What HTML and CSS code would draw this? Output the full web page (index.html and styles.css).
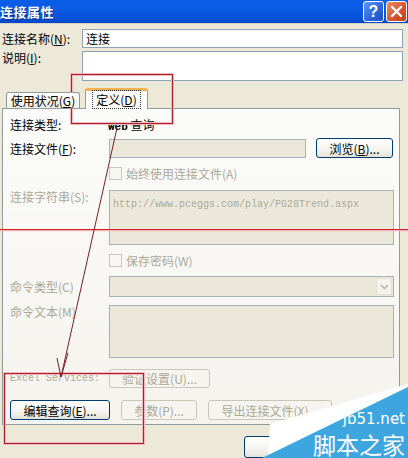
FILE: index.html
```html
<!DOCTYPE html>
<html>
<head>
<meta charset="utf-8">
<link rel="stylesheet" href="styles.css">
</head>
<body>
<div class="win">
  <div class="titlebar">
    <span class="title">连接属性</span>
    <div class="tbtns">
      <span class="tb help">?</span>
      <span class="tb close"><svg width="13" height="13" viewBox="0 0 13 13"><path d="M2 2L11 11M11 2L2 11" stroke="#fff" stroke-width="2.4" stroke-linecap="round"/></svg></span>
    </div>
  </div>
  <div class="content">
    <div class="frow r-name"><span class="flabel">连接名称(<u>N</u>):</span><div class="field name">连接</div></div>
    <div class="frow r-desc"><span class="flabel">说明(<u>I</u>):</span><div class="field desc"></div></div>
    <div class="tabs">
      <div class="tab">使用状况(<u>G</u>)</div>
      <div class="tab active"><span class="focus">定义(<u>D</u>)</span></div>
    </div>
    <div class="panel">
      <div class="prow r1"><span class="plabel">连接类型:</span><span class="val"><span class="mono">Web</span> 查询</span></div>
      <div class="prow r2"><span class="plabel">连接文件(<u>F</u>):</span><div class="field dis file"></div><div class="btn browse">浏览(<u>B</u>)...</div></div>
      <div class="prow r3"><span class="plabel"></span><span class="cb"></span><span class="cbl dim">始终使用连接文件(A)</span></div>
      <div class="prow r4"><span class="plabel dim top">连接字符串(S):</span><div class="field dis area cs"><span class="mono url">http://www.pceggs.com/play/PG28Trend.aspx</span></div></div>
      <div class="prow r5"><span class="plabel"></span><span class="cb"></span><span class="cbl dim">保存密码(W)</span></div>
      <div class="prow r6"><span class="plabel dim">命令类型(C)</span><div class="field dis sel"><span class="dd"><svg width="9" height="6" viewBox="0 0 9 6"><path d="M1 1L4.5 4.5L8 1" fill="none" stroke="#B9B6A8" stroke-width="1.6"/></svg></span></div></div>
      <div class="prow r7"><span class="plabel dim top">命令文本(M)</span><div class="field dis area ct"></div></div>
      <div class="prow r8"><span class="plabel dim mono xs">Excel Services:</span><div class="btn disb verify">验证设置(U)...</div></div>
      <div class="prow r9"><div class="btn edit">编辑查询(<u>E</u>)...</div><div class="btn disb params">参数(P)...</div><div class="btn disb export">导出连接文件(X)...</div></div>
    </div>
    <div class="footer"><div class="btn ok">确定</div></div>
  </div>
</div>
<svg class="overlay" width="408" height="458" viewBox="0 0 408 458">
  <g fill="none">
    <rect x="71.5" y="74.5" width="101" height="49" stroke="#f4b8bc" stroke-width="3"/>
    <rect x="71.5" y="74.5" width="101" height="49" stroke="#a8232f" stroke-width="1"/>
    <rect x="4.5" y="373.5" width="139" height="70" stroke="#f4b8bc" stroke-width="3"/>
    <rect x="4.5" y="373.5" width="139" height="70" stroke="#a8232f" stroke-width="1"/>
    <line x1="0" y1="230.5" x2="408" y2="230.5" stroke="#f3b3b6" stroke-width="1.5"/>
    <line x1="0" y1="229.5" x2="408" y2="229.5" stroke="#d0202c" stroke-width="1"/>
    <line x1="117" y1="128" x2="61" y2="377" stroke="#7a1f28" stroke-width="1"/>
    <line x1="61" y1="377" x2="57" y2="358" stroke="#7a1f28" stroke-width="1"/>
    <line x1="61" y1="377" x2="68" y2="353" stroke="#7a1f28" stroke-width="1"/>
  </g>
  <polygon points="408,384 270,424 268,458 408,458" fill="#ffffff"/>
  <polygon points="408,387 262,458 408,458" fill="#3ea6df"/>
  <text x="405" y="424" text-anchor="end" class="wm1">jb51.net</text>
  <text x="405" y="454" text-anchor="end" class="wm2">脚本之家</text>
</svg>
</body>
</html>
```
FILE: styles.css
```css
* { box-sizing: border-box; }
html, body { margin: 0; padding: 0; }
body {
  width: 408px; height: 458px; overflow: hidden; position: relative;
  background: #ECE9D8;
  font-family: "Noto Sans CJK SC", "Liberation Sans", sans-serif;
  font-size: 12px; color: #000;
}
u { text-decoration: underline; text-underline-offset: 1px; }
.win { width: 408px; height: 458px; }
.titlebar {
  height: 24px; display: flex; align-items: center; justify-content: space-between;
  background: linear-gradient(#0a5ee8 0%, #0b5ae4 40%, #0550d6 85%, #0346c6 100%);
  border-bottom: 1px solid #d6d3c3;
}
.title { color: #fff; font-weight: bold; font-size: 13px; padding-left: 0; letter-spacing: 0.5px; text-shadow: 1px 1px 0 #0a2f8a; }
.tbtns { display: flex; gap: 2px; padding-right: 1px; align-self: flex-start; padding-top: 1px; }
.tb {
  width: 21px; height: 21px; border: 1px solid #fff; border-radius: 3px;
  display: flex; align-items: center; justify-content: center;
  color: #fff; font-weight: bold; font-size: 16px; font-family: "Liberation Sans", sans-serif;
}
.help { background: linear-gradient(135deg, #5f97f6, #2a63dc 60%, #1c4fc6); }
.close { background: linear-gradient(135deg, #eb8d6b, #d4532c 60%, #c0401c); }
.content { padding: 0 5px 0 2px; }
.frow { display: flex; }
.flabel { width: 80px; line-height: 16px; }
.r-name { margin-top: 5px; height: 19px; }
.r-name .flabel { line-height: 19px; }
.r-desc { margin-top: 3px; height: 30px; }
.r-desc .flabel { line-height: 14px; }
.field { background: #fff; border: 1px solid #8fa2b5; }
.name { width: 321px; height: 19px; line-height: 17px; padding-left: 3px; }
.desc { width: 321px; height: 30px; }
.tabs { margin-top: 7px; height: 20px; display: flex; align-items: flex-end; padding-left: 2px; position: relative; z-index: 1; }
.tab {
  width: 74px; height: 16px; line-height: 15px; text-align: center;
  border: 1px solid #919b9c; border-bottom: none; border-radius: 3px 3px 0 0;
  background: linear-gradient(#ffffff, #f0efe9); margin-left: 2px;
}
.tab.active {
  width: 63px; height: 21px; margin-left: 5px; margin-bottom: -1px;
  border-top: 3px solid #f5b14c; background: #fcfcfb; padding-top: 1px; line-height: 15px;
}
.focus { border: 1px dotted #333; padding: 0 3px; }
.panel {
  width: 398px; height: 317px; border: 1px solid #919b9c;
  background: linear-gradient(#fbfbf9, #f4f3ee);
  padding: 8px 5px 0 7px;
}
.prow { display: flex; align-items: center; }
.plabel { width: 99px; flex: none; }
.plabel.top { align-self: flex-start; line-height: 14px; }
.dim { color: #aca899; }
.mono { font-family: "Liberation Mono", monospace; }
.xs { font-size: 10px; }
.r1 { height: 14px; }
.r1 .val { margin-left: -1px; }
.r1 .mono { font-size: 11px; font-weight: bold; }
.r2 { margin-top: 7px; height: 20px; }
.dis { background: #ebe8da; border-color: #a9b0b8; }
.file { width: 197px; height: 19px; }
.btn {
  height: 20px; border: 1px solid #003c74; border-radius: 3px;
  background: linear-gradient(#ffffff, #f4f3ee 60%, #e3e1d6);
  display: flex; align-items: center; justify-content: center;
}
.browse { width: 77px; margin-left: 10px; }
.r3 { margin-top: 8px; height: 15px; }
.cb { width: 13px; height: 13px; border: 1px solid #cac8bb; background: #f7f6f1; flex: none; }
.cbl { margin-left: 4px; }
.r4 { margin-top: 9px; height: 55px; align-items: stretch; }
.area { width: 285px; }
.cs { height: 55px; padding: 2px 0 0 3px; }
.url { font-size: 10px; color: #aca899; line-height: 14px; }
.r5 { margin-top: 8px; height: 14px; }
.r6 { margin-top: 9px; height: 21px; }
.sel { width: 285px; height: 21px; display: flex; justify-content: flex-end; align-items: center; padding-right: 1px; }
.dd { width: 16px; height: 17px; background: #f4f3ee; border: 1px solid #e2dfd3; display: flex; align-items: center; justify-content: center; }
.r7 { margin-top: 8px; height: 53px; align-items: stretch; }
.ct { height: 53px; }
.r8 { margin-top: 11px; height: 19px; }
.disb { border-color: #c9c7ba; color: #aca899; background: #f5f4ef; }
.verify { width: 101px; height: 19px; }
.r9 { margin-top: 12px; height: 20px; }
.edit { width: 100px; }
.params { width: 76px; margin-left: 11px; }
.export { width: 124px; margin-left: 11px; }
.footer { margin-top: 11px; display: flex; padding-left: 242px; }
.ok { width: 75px; height: 22px; }
.overlay { position: absolute; left: 0; top: 0; pointer-events: none; }
.wm1 { fill: #fff; font-family: "DejaVu Sans", sans-serif; font-size: 15px; }
.wm2 { fill: #fff; font-family: "Noto Sans CJK SC", sans-serif; font-size: 23px; }
```
